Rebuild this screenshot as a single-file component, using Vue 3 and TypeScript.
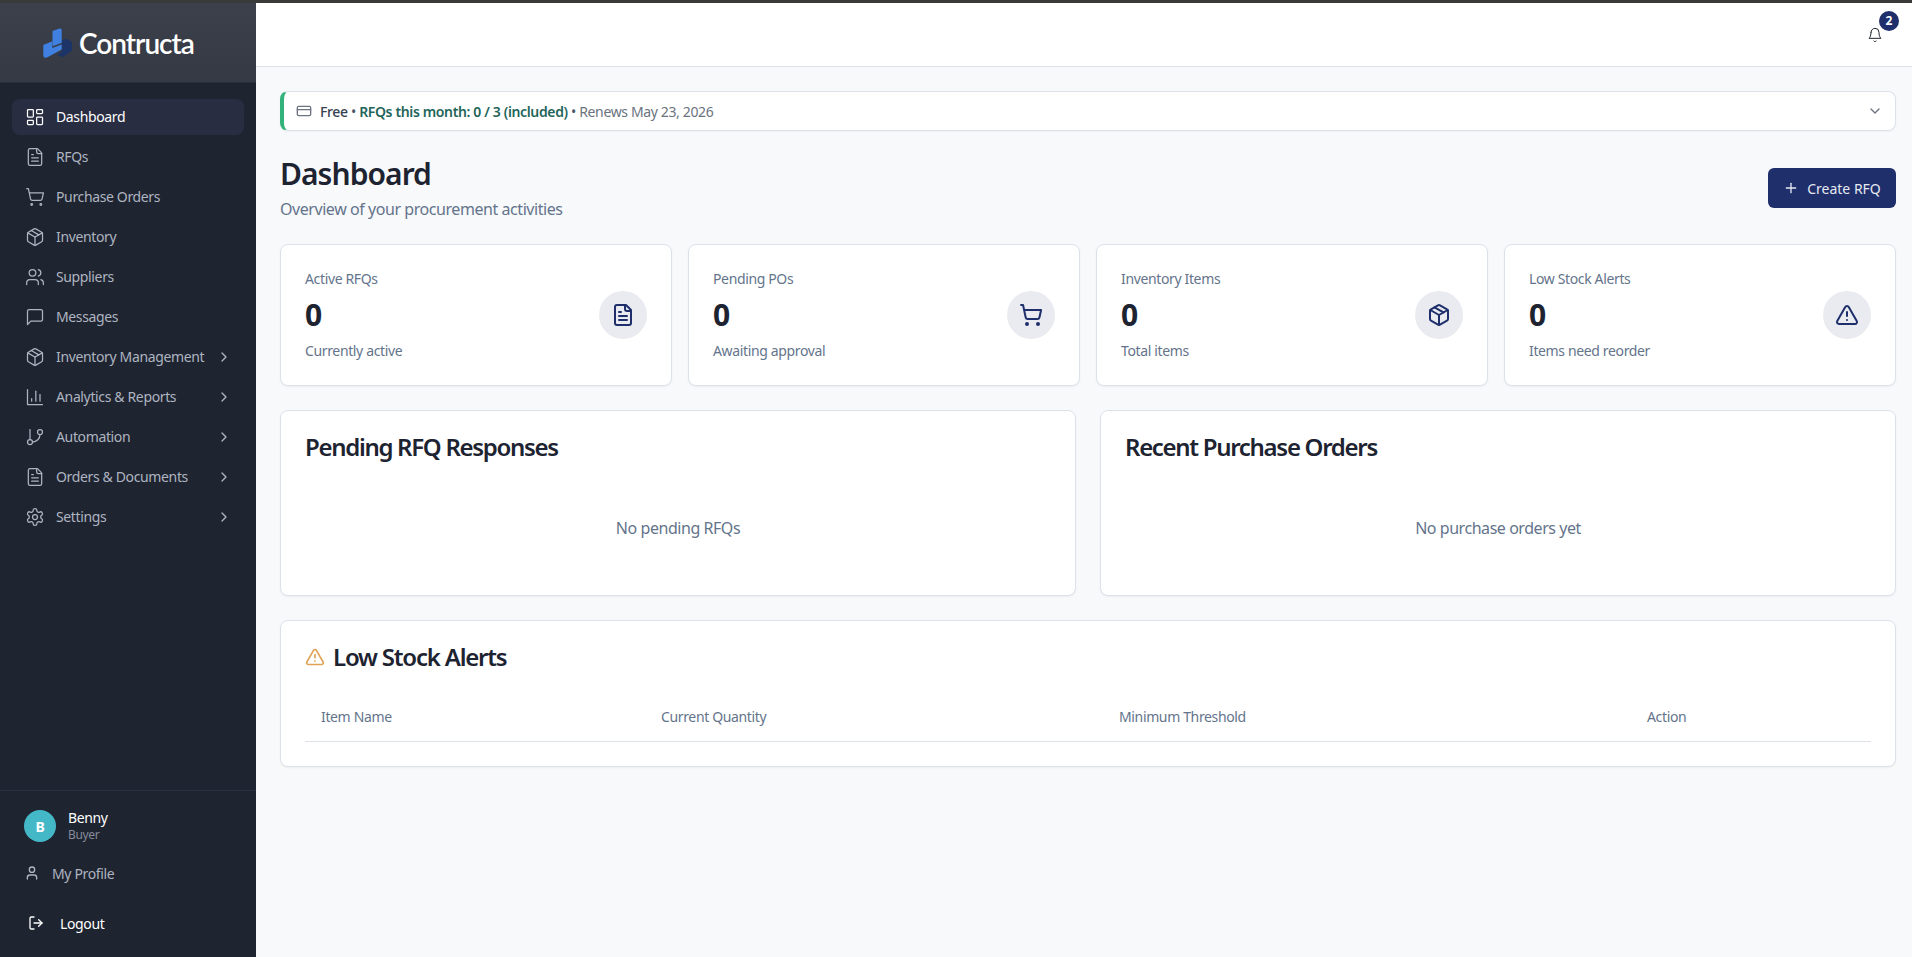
<script setup lang="ts">
const icons: Record<string, string> = {
  dashboard: '<rect width="7" height="9" x="3" y="3" rx="1"/><rect width="7" height="5" x="14" y="3" rx="1"/><rect width="7" height="9" x="14" y="12" rx="1"/><rect width="7" height="5" x="3" y="16" rx="1"/>',
  file: '<path d="M15 2H6a2 2 0 0 0-2 2v16a2 2 0 0 0 2 2h12a2 2 0 0 0 2-2V7Z"/><path d="M14 2v4a2 2 0 0 0 2 2h4"/><path d="M10 9H8"/><path d="M16 13H8"/><path d="M16 17H8"/>',
  cart: '<circle cx="8" cy="21" r="1"/><circle cx="19" cy="21" r="1"/><path d="M2.05 2.05h2l2.66 12.42a2 2 0 0 0 2 1.58h9.78a2 2 0 0 0 1.95-1.57l1.65-7.43H5.12"/>',
  box: '<path d="M11 21.73a2 2 0 0 0 2 0l7-4A2 2 0 0 0 21 16V8a2 2 0 0 0-1-1.73l-7-4a2 2 0 0 0-2 0l-7 4A2 2 0 0 0 3 8v8a2 2 0 0 0 1 1.73z"/><path d="M12 22V12"/><path d="M3.29 7 12 12l8.71-5"/><path d="m7.5 4.27 9 5.15"/>',
  users: '<path d="M16 21v-2a4 4 0 0 0-4-4H6a4 4 0 0 0-4 4v2"/><circle cx="9" cy="7" r="4"/><path d="M22 21v-2a4 4 0 0 0-3-3.87"/><path d="M16 3.13a4 4 0 0 1 0 7.75"/>',
  message: '<path d="M21 15a2 2 0 0 1-2 2H7l-4 4V5a2 2 0 0 1 2-2h14a2 2 0 0 1 2 2z"/>',
  chart: '<path d="M3 3v18h18"/><path d="M18 17V9"/><path d="M13 17V5"/><path d="M8 17v-3"/>',
  branch: '<line x1="6" x2="6" y1="3" y2="15"/><circle cx="18" cy="6" r="3"/><circle cx="6" cy="18" r="3"/><path d="M18 9a9 9 0 0 1-9 9"/>',
  settings: '<path d="M12.22 2h-.44a2 2 0 0 0-2 2v.18a2 2 0 0 1-1 1.73l-.43.25a2 2 0 0 1-2 0l-.15-.08a2 2 0 0 0-2.73.73l-.22.38a2 2 0 0 0 .73 2.73l.15.1a2 2 0 0 1 1 1.72v.51a2 2 0 0 1-1 1.74l-.15.09a2 2 0 0 0-.73 2.73l.22.38a2 2 0 0 0 2.73.73l.15-.08a2 2 0 0 1 2 0l.43.25a2 2 0 0 1 1 1.73V20a2 2 0 0 0 2 2h.44a2 2 0 0 0 2-2v-.18a2 2 0 0 1 1-1.73l.43-.25a2 2 0 0 1 2 0l.15.08a2 2 0 0 0 2.73-.73l.22-.39a2 2 0 0 0-.73-2.73l-.15-.08a2 2 0 0 1-1-1.74v-.5a2 2 0 0 1 1-1.74l.15-.09a2 2 0 0 0 .73-2.73l-.22-.38a2 2 0 0 0-2.73-.73l-.15.08a2 2 0 0 1-2 0l-.43-.25a2 2 0 0 1-1-1.73V4a2 2 0 0 0-2-2z"/><circle cx="12" cy="12" r="3"/>',
  alert: '<path d="m21.73 18-8-14a2 2 0 0 0-3.48 0l-8 14A2 2 0 0 0 4 21h16a2 2 0 0 0 1.73-3"/><path d="M12 9v4"/><path d="M12 17h.01"/>',
  bell: '<path d="M6 8a6 6 0 0 1 12 0c0 7 3 9 3 9H3s3-2 3-9"/><path d="M10.3 21a1.94 1.94 0 0 0 3.4 0"/>',
  card: '<rect width="20" height="14" x="2" y="5" rx="2"/><line x1="2" x2="22" y1="10" y2="10"/>',
  user: '<path d="M19 21v-2a4 4 0 0 0-4-4H9a4 4 0 0 0-4 4v2"/><circle cx="12" cy="7" r="4"/>',
  logout: '<path d="M9 21H5a2 2 0 0 1-2-2V5a2 2 0 0 1 2-2h4"/><path d="m16 17 5-5-5-5"/><path d="M21 12H9"/>',
  chevronRight: '<path d="m9 18 6-6-6-6"/>',
  chevronDown: '<path d="m6 9 6 6 6-6"/>',
  plus: '<path d="M5 12h14"/><path d="M12 5v14"/>',
};

const navItems = [
  { label: 'Dashboard', icon: 'dashboard', active: true },
  { label: 'RFQs', icon: 'file' },
  { label: 'Purchase Orders', icon: 'cart' },
  { label: 'Inventory', icon: 'box' },
  { label: 'Suppliers', icon: 'users' },
  { label: 'Messages', icon: 'message' },
  { label: 'Inventory Management', icon: 'box', more: true },
  { label: 'Analytics & Reports', icon: 'chart', more: true },
  { label: 'Automation', icon: 'branch', more: true },
  { label: 'Orders & Documents', icon: 'file', more: true },
  { label: 'Settings', icon: 'settings', more: true },
];

const stats = [
  { label: 'Active RFQs', value: 0, note: 'Currently active', icon: 'file' },
  { label: 'Pending POs', value: 0, note: 'Awaiting approval', icon: 'cart' },
  { label: 'Inventory Items', value: 0, note: 'Total items', icon: 'box' },
  { label: 'Low Stock Alerts', value: 0, note: 'Items need reorder', icon: 'alert' },
];
</script>

<template>
  <div class="app">
    <aside class="sidebar">
      <div class="brand">
        <svg class="brand__mark" viewBox="0 0 30 30" aria-hidden="true">
          <path fill="#1d3468" d="M18.7 12.5 L23 10.8 L29 14 V22.5 L20 29 L14 27 L18.7 24 Z" />
          <path fill="#3f80e0" d="M9.5 3 L16.5 .5 Q18.7 0 18.7 2.2 V14.8 L10.5 18 L9.5 17 Z" />
          <path fill="#3f80e0" d="M.3 17 L9.3 13.2 V20 L18.7 16.5 V21.5 L4 29.5 Q.3 30.5 .3 27.5 Z" />
        </svg>
        <span class="brand__name">Contructa</span>
      </div>
      <nav class="nav">
        <a v-for="item in navItems" :key="item.label" class="nav__item" :class="{ 'nav__item--active': item.active }">
          <svg class="ico ico--nav" viewBox="0 0 24 24" v-html="icons[item.icon]" />
          <span class="nav__label">{{ item.label }}</span>
          <svg v-if="item.more" class="ico ico--chev" viewBox="0 0 24 24" v-html="icons.chevronRight" />
        </a>
      </nav>
      <div class="account">
        <div class="account__user">
          <span class="avatar">B</span>
          <div>
            <div class="account__name">Benny</div>
            <div class="account__role">Buyer</div>
          </div>
        </div>
        <a class="account__profile">
          <svg class="ico ico--small" viewBox="0 0 24 24" v-html="icons.user" />
          My Profile
        </a>
        <a class="account__logout">
          <svg class="ico ico--small" viewBox="0 0 24 24" v-html="icons.logout" />
          Logout
        </a>
      </div>
    </aside>

    <div class="main">
      <header class="topbar">
        <button type="button" class="bell" aria-label="Notifications">
          <svg class="ico ico--bell" viewBox="0 0 24 24" v-html="icons.bell" />
          <span class="bell__badge">2</span>
        </button>
      </header>

      <main class="content">
        <div class="plan">
          <svg class="ico ico--plan" viewBox="0 0 24 24" v-html="icons.card" />
          <span class="plan__text">
            <span class="plan__tier">Free</span> •
            <span class="plan__usage">RFQs this month: 0 / 3 (included)</span> •
            <span class="plan__renew">Renews May 23, 2026</span>
          </span>
          <svg class="ico ico--plan-chev" viewBox="0 0 24 24" v-html="icons.chevronDown" />
        </div>

        <div class="page-head">
          <div>
            <h1 class="page-head__title">Dashboard</h1>
            <p class="page-head__sub">Overview of your procurement activities</p>
          </div>
          <button type="button" class="btn">
            <svg class="ico ico--plus" viewBox="0 0 24 24" v-html="icons.plus" />
            Create RFQ
          </button>
        </div>

        <section class="stats">
          <div v-for="stat in stats" :key="stat.label" class="card stat">
            <div>
              <p class="stat__label">{{ stat.label }}</p>
              <p class="stat__value">{{ stat.value }}</p>
              <p class="stat__note">{{ stat.note }}</p>
            </div>
            <span class="stat__icon">
              <svg class="ico ico--stat" viewBox="0 0 24 24" v-html="icons[stat.icon]" />
            </span>
          </div>
        </section>

        <section class="panels">
          <div class="card panel">
            <h2 class="panel__title">Pending RFQ Responses</h2>
            <p class="panel__empty">No pending RFQs</p>
          </div>
          <div class="card panel">
            <h2 class="panel__title">Recent Purchase Orders</h2>
            <p class="panel__empty">No purchase orders yet</p>
          </div>
        </section>

        <section class="card alerts">
          <h2 class="panel__title alerts__title">
            <svg class="ico ico--warn" viewBox="0 0 24 24" v-html="icons.alert" />
            Low Stock Alerts
          </h2>
          <table class="table">
            <thead>
              <tr>
                <th class="col-name">Item Name</th>
                <th class="col-qty">Current Quantity</th>
                <th class="col-min">Minimum Threshold</th>
                <th>Action</th>
              </tr>
            </thead>
          </table>
        </section>
      </main>
    </div>
  </div>
</template>

<style>
html, body { margin: 0; background: #f8f9fb; }
</style>

<style scoped>
.app {
  display: flex;
  height: 957px;
  overflow: hidden;
  border-top: 3px solid #3a3a38;
  box-sizing: border-box;
  font-family: "Noto Sans", sans-serif;
  font-size: 14px;
  letter-spacing: -0.36px;
  color: #1d2330;
}
p, h1, h2 { margin: 0; }
.ico {
  display: block;
  flex-shrink: 0;
  fill: none;
  stroke: currentColor;
  stroke-width: 2;
  stroke-linecap: round;
  stroke-linejoin: round;
}
.ico--nav { width: 20px; height: 20px; stroke-width: 1.5; }
.ico--chev { width: 16px; height: 16px; }
.ico--small { width: 16px; height: 16px; }
.ico--bell { width: 16px; height: 16px; color: #1d2330; stroke-width: 1.5; }
.ico--plan { width: 16px; height: 16px; color: #6b7280; }
.ico--plan-chev { width: 16px; height: 16px; color: #6b7280; margin-left: auto; }
.ico--plus { width: 16px; height: 16px; }
.ico--stat { width: 24px; height: 24px; }
.ico--warn { width: 20px; height: 20px; color: #e0a458; }

.sidebar {
  width: 256px;
  flex-shrink: 0;
  display: flex;
  flex-direction: column;
  background: #1e2430;
  color: #aeb4c0;
}
.brand {
  height: 80px;
  flex-shrink: 0;
  display: flex;
  align-items: center;
  gap: 6px;
  padding-left: 43px;
  background: linear-gradient(180deg, #3c404a, #343944);
  border-bottom: 1px solid #2a2f40;
  box-sizing: border-box;
}
.brand__mark { width: 30px; height: 30px; }
.brand__name {
  font-family: Lato, sans-serif;
  font-size: 28px;
  font-weight: 600;
  letter-spacing: -1px;
  color: #fff;
}
.nav {
  flex: 1;
  display: flex;
  flex-direction: column;
  gap: 4px;
  padding: 16px 12px;
}
.nav__item {
  display: flex;
  align-items: center;
  gap: 11px;
  height: 36px;
  padding: 0 12px 0 13px;
  border-radius: 8px;
}
.nav__item--active { background: #282d42; color: #fff; }
.nav__label { flex: 1; white-space: nowrap; padding-bottom: 1px; }
.account {
  border-top: 1px solid #2a2f40;
  padding: 18px 24px 0;
  height: 167px;
  box-sizing: border-box;
}
.account__user { display: flex; align-items: center; gap: 12px; }
.avatar {
  width: 32px;
  height: 32px;
  border-radius: 50%;
  background: #45b8c8;
  color: #fff;
  font-weight: 700;
  font-size: 14px;
  display: flex;
  align-items: center;
  justify-content: center;
}
.account__name { color: #fff; font-size: 14px; line-height: 18px; }
.account__role { font-size: 12px; line-height: 16px; color: #868b9a; }
.account__profile {
  display: flex;
  align-items: center;
  gap: 12px;
  margin-top: 18px;
  height: 24px;
  color: #aeb4c0;
}
.account__logout {
  display: flex;
  align-items: center;
  gap: 16px;
  margin-top: 26px;
  height: 24px;
  color: #fff;
  padding-left: 4px;
}

.main { flex: 1; min-width: 0; display: flex; flex-direction: column; }
.topbar {
  height: 64px;
  flex-shrink: 0;
  display: flex;
  align-items: center;
  justify-content: flex-end;
  padding: 0 16px;
  background: #fff;
  border-bottom: 1px solid #dde2ea;
  box-sizing: border-box;
}
.bell {
  position: relative;
  border: 0;
  background: none;
  padding: 0;
  margin-right: 13px;
  font: inherit;
}
.bell__badge {
  position: absolute;
  top: -16px;
  left: 12px;
  width: 20px;
  height: 20px;
  border-radius: 50%;
  background: #1e2f6b;
  color: #fff;
  font-size: 12px;
  font-weight: 700;
  letter-spacing: 0;
  display: flex;
  align-items: center;
  justify-content: center;
}
.content { flex: 1; padding: 24px 16px 0 24px; }

.plan {
  height: 40px;
  box-sizing: border-box;
  display: flex;
  align-items: center;
  gap: 8px;
  padding: 0 12px;
  background: #fff;
  border: 1px solid #dde2ea;
  border-left: 4px solid #34b27b;
  border-radius: 8px;
  box-shadow: 0 1px 2px rgba(0, 0, 0, 0.04);
  font-size: 14px;
  color: #475569;
}
.plan__tier { color: #374151; font-weight: 500; }
.plan__usage { color: #24655a; font-weight: 600; }
.plan__renew { color: #6b7280; }

.page-head {
  display: flex;
  justify-content: space-between;
  align-items: center;
  margin-top: 25px;
}
.page-head__title { font-size: 30px; font-weight: 600; line-height: 36px; letter-spacing: -0.95px; color: #1d2330; }
.page-head__sub { font-size: 16px; line-height: 24px; margin-top: 5px; letter-spacing: -0.44px; color: #64748b; }
.btn {
  height: 40px;
  width: 128px;
  margin-bottom: 1px;
  display: flex;
  align-items: center;
  justify-content: center;
  gap: 8px;
  border: 0;
  border-radius: 6px;
  background: #1e2f6b;
  color: #e6e9f2;
  font: inherit;
  letter-spacing: 0;
}

.card {
  background: #fff;
  border: 1px solid #dde2ea;
  border-radius: 8px;
  box-shadow: 0 1px 2px rgba(0, 0, 0, 0.05);
  box-sizing: border-box;
}
.stats {
  display: grid;
  grid-template-columns: repeat(4, 1fr);
  gap: 16px;
  margin-top: 23px;
}
.stat {
  height: 142px;
  display: flex;
  align-items: center;
  justify-content: space-between;
  padding: 0 24px;
}
.stat__label { font-size: 14px; line-height: 20px; color: #64748b; }
.stat__value { font-size: 30px; font-weight: 700; line-height: 36px; margin: 8px 0; color: #1d2330; }
.stat__note { font-size: 14px; line-height: 20px; color: #64748b; }
.stat__icon {
  width: 48px;
  height: 48px;
  border-radius: 50%;
  background: #e9ebf0;
  color: #1e2f6b;
  display: flex;
  align-items: center;
  justify-content: center;
}

.panels {
  display: grid;
  grid-template-columns: repeat(2, 1fr);
  gap: 24px;
  margin-top: 24px;
}
.panel { height: 186px; padding: 24px; }
.panel__title { font-size: 24px; font-weight: 600; line-height: 24px; letter-spacing: -1.3px; color: #1d2330; }
.panel__empty { text-align: center; margin-top: 57px; color: #64748b; font-size: 16px; line-height: 24px; letter-spacing: -0.45px; }

.alerts { margin-top: 24px; height: 147px; padding: 24px; }
.alerts__title { display: flex; align-items: center; gap: 8px; letter-spacing: -1.2px; }
.table { width: 100%; table-layout: fixed; border-collapse: collapse; margin-top: 24px; }
.table th {
  box-sizing: border-box;
  height: 48px;
  text-align: left;
  font-weight: 400;
  padding: 0 16px;
  color: #64748b;
  border-bottom: 1px solid #dde2ea;
}
.col-name { width: 340px; }
.col-qty { width: 458px; }
.col-min { width: 528px; }
</style>
